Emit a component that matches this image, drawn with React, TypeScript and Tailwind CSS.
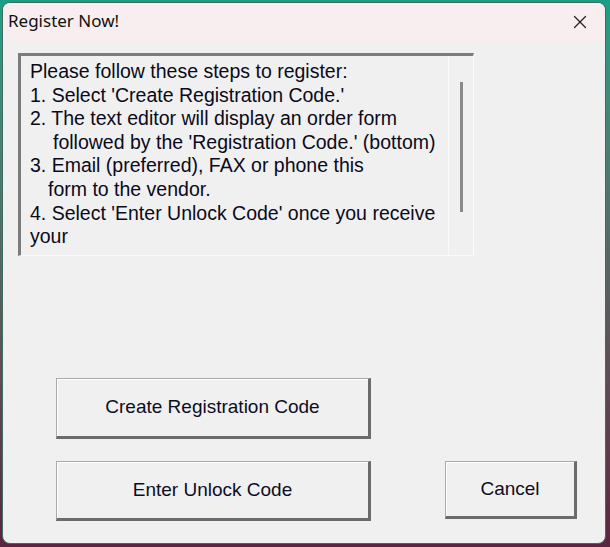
import { X } from "lucide-react";

const lines: { text: string; indent?: string }[] = [
  { text: "Please follow these steps to register:" },
  { text: "1. Select 'Create Registration Code.'" },
  { text: "2. The text editor will display an order form" },
  { text: "followed by the 'Registration Code.' (bottom)", indent: "pl-[23px]" },
  { text: "3. Email (preferred), FAX or phone this" },
  { text: "form to the vendor.", indent: "pl-[18px]" },
  { text: "4. Select 'Enter Unlock Code' once you receive" },
  { text: "your" },
];

function DlgButton({ label, className }: { label: string; className: string }) {
  return (
    <button
      className={
        "flex items-center justify-center bg-[#f0f0f0] border-t border-l border-[#a9a9a9] border-r-[3px] border-b-[3px] border-r-[#6b6b6b] border-b-[#6b6b6b] shadow-[inset_1px_1px_0_#ffffff] text-[19px] text-[#0d0d1f] font-['Liberation_Sans',Arial,sans-serif] " +
        className
      }
    >
      {label}
    </button>
  );
}

export default function App() {
  return (
    <div className="w-[610px] h-[547px] bg-gradient-to-b from-[#17a086] to-[#5b2440] pt-[2px] pl-[2px] pr-[4px] pb-[3px]">
      <div className="h-full flex flex-col rounded-[8px] overflow-hidden bg-[#f0f0f0] border border-[#3e6b60]">
        {/* title bar */}
        <div className="h-[38px] shrink-0 bg-[#f8eef0] flex items-center justify-between pl-[5px] pr-[14px]">
          <span className="text-[17px] text-[#111] font-['Noto_Sans',sans-serif] -mt-[2px]">Register Now!</span>
          <X size={22} strokeWidth={1.3} className="text-[#222]" />
        </div>

        {/* body */}
        <div className="flex-1 flex flex-col pl-[15px] pt-[12px]">
          <div className="w-[456px] h-[203px] flex border-t-[3px] border-l-[3px] border-[#7c7c7c] border-r border-b border-r-[#fafafa] border-b-[#fafafa] bg-[#f0f0f0]">
            <div className="flex-1 pl-[9px] pt-[4px] text-[19.5px] leading-[23.6px] text-[#0a0a1a] font-['Liberation_Sans',Arial,sans-serif] whitespace-nowrap overflow-hidden">
              {lines.map((l, i) => (
                <div key={i} className={l.indent}>
                  {l.text}
                </div>
              ))}
            </div>
            <div className="w-[25px] border-l border-[#fafafa] flex justify-center pt-[26px]">
              <div className="w-[3px] h-[130px] bg-[#8a8a8a]" />
            </div>
          </div>

          <div className="flex flex-col pl-[38px] mt-[122px] gap-[22px]">
            <DlgButton label="Create Registration Code" className="w-[315px] h-[61px]" />
            <div className="flex items-start">
              <DlgButton label="Enter Unlock Code" className="w-[315px] h-[60px]" />
              <DlgButton label="Cancel" className="w-[132px] h-[58px] ml-[74px]" />
            </div>
          </div>
        </div>
      </div>
    </div>
  );
}
